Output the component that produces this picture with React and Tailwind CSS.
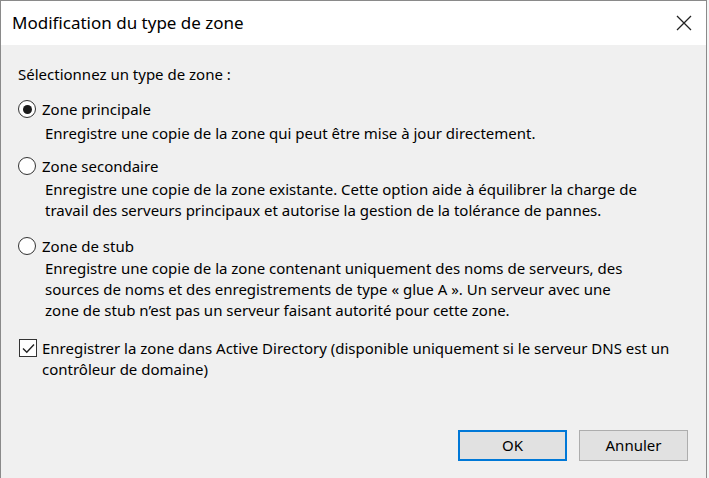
import { useState } from "react";

const options = [
  {
    id: "primary",
    label: "Zone principale",
    gap: "mt-[12px]",
    descPad: "pt-[2px]",
    lines: ["Enregistre une copie de la zone qui peut être mise à jour directement."],
  },
  {
    id: "secondary",
    label: "Zone secondaire",
    gap: "mt-[10px]",
    descPad: "pt-[1px]",
    lines: [
      "Enregistre une copie de la zone existante. Cette option aide à équilibrer la charge de",
      "travail des serveurs principaux et autorise la gestion de la tolérance de pannes.",
    ],
  },
  {
    id: "stub",
    label: "Zone de stub",
    gap: "mt-[13px]",
    descPad: "pt-[0px]",
    lines: [
      "Enregistre une copie de la zone contenant uniquement des noms de serveurs, des",
      "sources de noms et des enregistrements de type « glue A ». Un serveur avec une",
      "zone de stub n’est pas un serveur faisant autorité pour cette zone.",
    ],
  },
];

function Radio({ checked }) {
  return (
    <span className="flex h-[18px] w-[18px] shrink-0 items-center justify-center rounded-full border-[1.5px] border-[#333] bg-white">
      {checked && <span className="h-[9px] w-[9px] rounded-full bg-[#1a1a1a]" />}
    </span>
  );
}

export default function App() {
  const [zone, setZone] = useState("primary");
  const [inAd, setInAd] = useState(true);

  return (
    <div
      className="flex h-[478px] w-[709px] bg-white text-black"
      style={{ fontFamily: '"Noto Sans", "Liberation Sans", sans-serif' }}
    >
      <div className="flex w-[707px] flex-col border border-[#8a8a8a] border-b-0">
        <div className="flex h-[44px] items-center justify-between bg-white pl-[11px] pr-[14px]">
          <span className="text-[17px]">Modification du type de zone</span>
          <svg width="16" height="16" viewBox="0 0 16 16" className="text-[#222]">
            <path d="M1 1 L15 15 M15 1 L1 15" stroke="currentColor" strokeWidth="1.3" fill="none" />
          </svg>
        </div>

        <div className="flex flex-1 flex-col bg-[#f0f0f0] pl-[17px] pr-[16px] pt-[19px] text-[15px] leading-[21px]">
          <p>Sélectionnez un type de zone :</p>

          {options.map((opt) => (
            <div key={opt.id} className={opt.gap}>
              <button
                type="button"
                onClick={() => setZone(opt.id)}
                className="flex h-[24px] items-center gap-[6px]"
              >
                <Radio checked={zone === opt.id} />
                <span>{opt.label}</span>
              </button>
              <div className={"pl-[27px] " + opt.descPad}>
                {opt.lines.map((line) => (
                  <p key={line}>{line}</p>
                ))}
              </div>
            </div>
          ))}

          <button
            type="button"
            onClick={() => setInAd((v) => !v)}
            className="mt-[17px] flex items-start gap-[5px] pl-[1px] text-left"
          >
            <span className="mt-[1px] flex h-[18px] w-[18px] shrink-0 items-center justify-center border-[1.5px] border-[#333] bg-white">
              {inAd && (
                <svg width="13" height="11" viewBox="0 0 13 11">
                  <path d="M1 5.5 L4.8 9.3 L12 1.5" stroke="#222" strokeWidth="1.4" fill="none" />
                </svg>
              )}
            </span>
            <span>
              Enregistrer la zone dans Active Directory (disponible uniquement si le serveur DNS est un
              <br />
              contrôleur de domaine)
            </span>
          </button>

          <div className="mt-auto mb-[17px] flex justify-end gap-[12px] pr-[2px]">
            <button
              type="button"
              className="h-[31px] w-[109px] border-2 border-[#0078d7] bg-[#e1e1e1] text-[15px]"
            >
              OK
            </button>
            <button
              type="button"
              className="h-[31px] w-[109px] border border-[#adadad] bg-[#e1e1e1] text-[15px]"
            >
              Annuler
            </button>
          </div>
        </div>
      </div>
      <div className="flex-1 bg-[#f5f5f5]" />
    </div>
  );
}
